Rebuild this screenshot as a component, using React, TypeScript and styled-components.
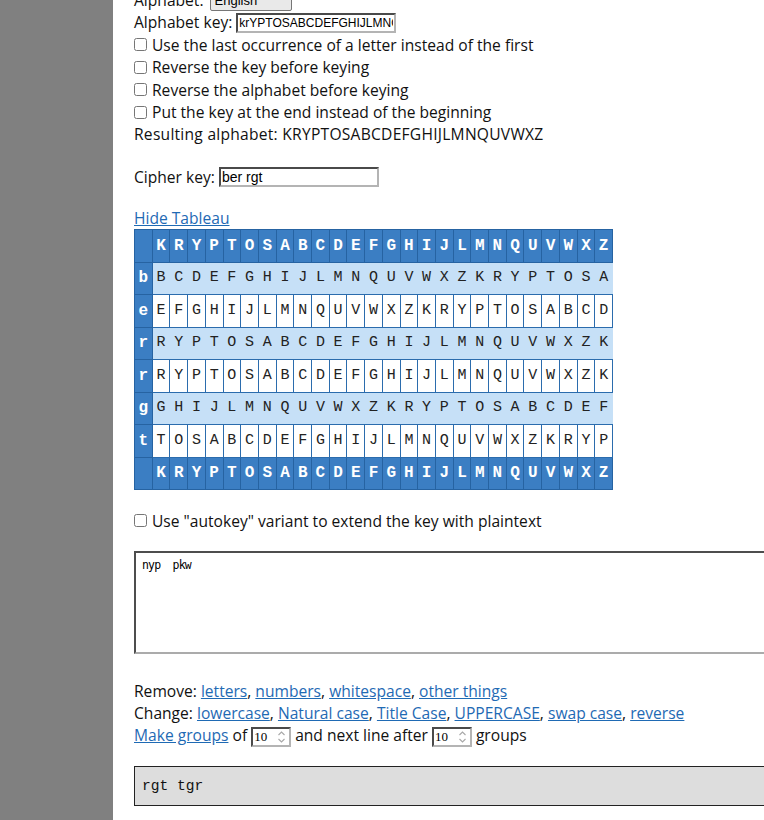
import React from "react";
import styled, { createGlobalStyle } from "styled-components";

const ALPHABET = "KRYPTOSABCDEFGHIJLMNQUVWXZ";
const CIPHER_KEY = "ber rgt";

const Global = createGlobalStyle`
  html, body {
    margin: 0;
    padding: 0;
    overflow: hidden;
    background: #ffffff;
  }
  body {
    font-family: "Open Sans", "Noto Sans", sans-serif;
    font-size: 15.6px;
    line-height: 22.4px;
    color: #111111;
  }
`;

const Page = styled.div`
  display: flex;
  width: 764px;
  min-height: 820px;
  overflow: hidden;
`;

const Sidebar = styled.aside`
  flex: 0 0 113px;
  background: #808080;
`;

const Main = styled.main`
  flex: 1;
  min-width: 0;
  padding-left: 21px;
  margin-top: -11px;
`;

const Line = styled.div<{ $gap?: number }>`
  display: flex;
  align-items: center;
  height: 22.4px;
  white-space: nowrap;
  margin-top: ${(p) => p.$gap ?? 0}px;
`;

const TextLine = styled.div<{ $gap?: number; $spacing?: number }>`
  height: 22.4px;
  line-height: 22.4px;
  white-space: nowrap;
  margin-top: ${(p) => p.$gap ?? 0}px;
  letter-spacing: ${(p) => p.$spacing ?? 0}px;
`;

const Label = styled.span`
  margin-right: 4px;
`;

const Select = styled.select`
  appearance: none;
  height: 21px;
  width: 82px;
  margin-left: 2px;
  padding: 0 4px;
  font-family: "Liberation Sans", sans-serif;
  font-size: 13px;
  background: #e9e9e9;
  border: 1px solid #767676;
  border-radius: 2px;
`;

const TextInput = styled.input<{ $size?: number }>`
  box-sizing: border-box;
  width: 160px;
  height: 20px;
  padding: 0 1px;
  font-family: "Liberation Sans", sans-serif;
  font-size: ${(p) => p.$size ?? 13}px;
  color: #000;
  background: #fff;
  border-style: solid;
  border-width: 2px;
  border-color: #4a4a4a #b4b4b4 #b4b4b4 #4a4a4a;
  outline: none;
`;

const NumberField = styled.span`
  display: inline-flex;
  align-items: center;
  box-sizing: border-box;
  width: 40px;
  height: 20px;
  margin: 0 4px;
  vertical-align: middle;
  background: #fff;
  border-style: solid;
  border-width: 2px;
  border-color: #4a4a4a #b4b4b4 #b4b4b4 #4a4a4a;
`;

const NumberValue = styled.input`
  width: 20px;
  min-width: 0;
  flex: 1;
  padding: 0 0 0 1px;
  border: none;
  outline: none;
  background: transparent;
  font-family: "Liberation Serif", serif;
  font-size: 13px;
  color: #000;
`;

const Spinner = styled.svg`
  flex: 0 0 auto;
  margin-right: 3px;
`;

const Check = styled.input`
  width: 13px;
  height: 13px;
  margin: 0 5px 0 0;
`;

const Link = styled.a`
  color: #1f6ab4;
  text-decoration: underline;
  cursor: pointer;
`;

const Tableau = styled.table`
  border-collapse: collapse;
  table-layout: fixed;
  width: 479px;
  font-family: "Liberation Mono", "DejaVu Sans Mono", monospace;
  font-size: 15px;
`;

type Variant = "head" | "light" | "white";

const Cell = styled.td<{ $variant: Variant }>`
  height: 31.5px;
  padding: 0;
  text-align: center;
  vertical-align: middle;
  border: 1px solid #2b6cad;
  ${(p) =>
    p.$variant === "head"
      ? `background: #3b7ec3; color: #ffffff; font-weight: bold; font-size: 16px; border-color: #2663a2;`
      : p.$variant === "light"
      ? `background: #c6e0f7; color: #222; border-left-color: #c6e0f7; border-right-color: #c6e0f7;`
      : `background: #ffffff; color: #222;`}
`;

const TextArea = styled.textarea`
  display: block;
  box-sizing: border-box;
  width: 680px;
  height: 103px;
  margin-top: 18.8px;
  padding: 5px 6px;
  resize: none;
  font-family: "DejaVu Sans Mono", monospace;
  font-size: 11.5px;
  letter-spacing: -0.8px;
  line-height: 14px;
  color: #000;
  border-style: solid;
  border-width: 2px;
  border-color: #4d4d4d #ababab #ababab #4d4d4d;
  outline: none;
`;

const Output = styled.div`
  box-sizing: border-box;
  display: flex;
  align-items: center;
  width: 680px;
  height: 40px;
  margin-top: 19px;
  padding: 0 7px;
  background: #dddddd;
  border: 1px solid #222222;
  font-family: "Liberation Mono", monospace;
  font-size: 14.6px;
  color: #111;
`;

function shifted(letter: string): string[] {
  const i = ALPHABET.indexOf(letter.toUpperCase());
  return (ALPHABET.slice(i) + ALPHABET.slice(0, i)).split("");
}

function NumberBox({ value }: { value: number }) {
  return (
    <NumberField>
      <NumberValue type="text" defaultValue={String(value)} />
      <Spinner width="9" height="14" viewBox="0 0 9 14">
        <path d="M1.5 5 L4.5 2 L7.5 5" fill="none" stroke="#a8a8a8" strokeWidth="1.1" />
        <path d="M1.5 9 L4.5 12 L7.5 9" fill="none" stroke="#a8a8a8" strokeWidth="1.1" />
      </Spinner>
    </NumberField>
  );
}

export default function App() {
  const keyLetters = CIPHER_KEY.replace(/\s/g, "").split("");
  const letters = ALPHABET.split("");
  const checks = [
    "Use the last occurrence of a letter instead of the first",
    "Reverse the key before keying",
    "Reverse the alphabet before keying",
    "Put the key at the end instead of the beginning",
  ];
  return (
    <>
      <Global />
      <Page>
        <Sidebar />
        <Main>
          <Line>
            <Label>Alphabet:</Label>
            <Select defaultValue="English">
              <option>English</option>
            </Select>
          </Line>
          <Line>
            <Label>Alphabet key:</Label>
            <TextInput $size={12} defaultValue="krYPTOSABCDEFGHIJLMNQUVWXZ" />
          </Line>
          {checks.map((c) => (
            <Line key={c}>
              <Check type="checkbox" />
              <span>{c}</span>
            </Line>
          ))}
          <TextLine $spacing={0.25}>Resulting alphabet: {ALPHABET}</TextLine>

          <Line $gap={20}>
            <Label>Cipher key:</Label>
            <TextInput $size={14} defaultValue={CIPHER_KEY} />
          </Line>

          <TextLine $gap={18.6}>
            <Link>Hide Tableau</Link>
          </TextLine>
          <Tableau>
            <tbody>
              <tr>
                <Cell $variant="head" />
                {letters.map((l, i) => (
                  <Cell key={i} $variant="head">
                    {l}
                  </Cell>
                ))}
              </tr>
              {keyLetters.map((k, r) => (
                <tr key={r}>
                  <Cell $variant="head">{k}</Cell>
                  {shifted(k).map((l, i) => (
                    <Cell key={i} $variant={r % 2 === 0 ? "light" : "white"}>
                      {l}
                    </Cell>
                  ))}
                </tr>
              ))}
              <tr>
                <Cell $variant="head" />
                {letters.map((l, i) => (
                  <Cell key={i} $variant="head">
                    {l}
                  </Cell>
                ))}
              </tr>
            </tbody>
          </Tableau>

          <Line $gap={19.6}>
            <Check type="checkbox" />
            <span>Use "autokey" variant to extend the key with plaintext</span>
          </Line>

          <TextArea defaultValue="nyp  pkw" spellCheck={false} />

          <TextLine $gap={25.8}>
            Remove: <Link>letters</Link>, <Link>numbers</Link>, <Link>whitespace</Link>,{" "}
            <Link>other things</Link>
          </TextLine>
          <TextLine>
            Change: <Link>lowercase</Link>, <Link>Natural case</Link>, <Link>Title Case</Link>,{" "}
            <Link>UPPERCASE</Link>, <Link>swap case</Link>, <Link>reverse</Link>
          </TextLine>
          <TextLine>
            <Link>Make groups</Link> of
            <NumberBox value={10} />
            and next line after
            <NumberBox value={10} />
            groups
          </TextLine>

          <Output>rgt tgr</Output>
        </Main>
      </Page>
    </>
  );
}
